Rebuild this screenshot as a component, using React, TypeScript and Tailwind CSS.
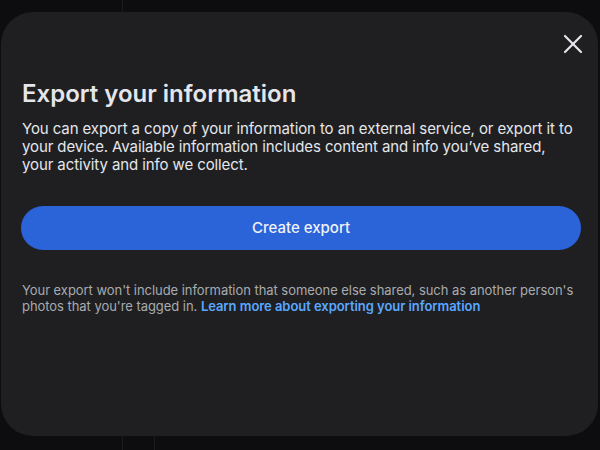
import { X } from "lucide-react";

export default function App() {
  return (
    <div className="relative h-[450px] w-[600px] overflow-hidden bg-[#0d0d0f] font-['Inter',sans-serif]">
      <div className="absolute left-[122px] top-0 h-full w-px bg-[#1c1c1f]" />
      <div className="absolute left-[154px] top-[430px] h-[20px] w-px bg-[#1c1c1f]" />
      <div className="relative ml-[1px] mt-[12px] flex h-[424px] w-[597px] flex-col rounded-[32px] bg-[#1f1f21] pl-[20px] pr-[17px] pt-[67px]">
        <button className="absolute right-[9px] top-[16px] text-[#e4e6eb]" aria-label="Close">
          <X size={32} strokeWidth={1.6} />
        </button>
        <h1 className="pl-[1px] text-[24px] font-semibold leading-[30px] text-[#e4e6eb]">Export your information</h1>
        <p className="mt-[11px] w-[556px] pl-[1px] text-[15px] leading-[18px] tracking-[-0.1px] text-[#e4e6eb]">
          You can export a copy of your information to an external service, or export it to your device. Available
          information includes content and info you’ve shared, your activity and info we collect.
        </p>
        <button className="mt-[32px] h-[44px] w-full shrink-0 rounded-full bg-[#2b63d9] text-[15px] font-medium text-[#f0f2f5]">
          Create export
        </button>
        <p className="mt-[32px] pl-[1px] text-[13px] leading-[16px] tracking-[-0.05px] text-[#a8abaf]">
          Your export won't include information that someone else shared, such as another person's photos that you're
          tagged in.{" "}
          <a className="font-semibold text-[#5aa7ff]" href="#">
            Learn more about exporting your information
          </a>
        </p>
      </div>
    </div>
  );
}
